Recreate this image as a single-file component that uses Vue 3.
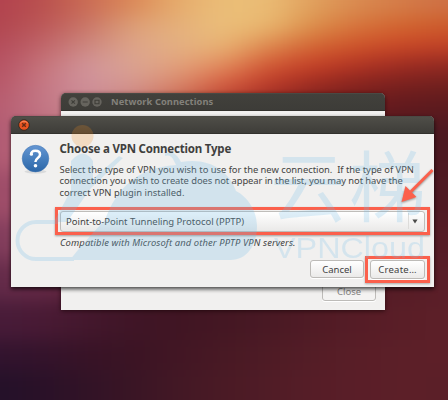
<script setup>
const rows = [
  { y: -30, h: 45, c: ['#b2424f', '#ba514e', '#cb6d55', '#dc8a58', '#e6ac6c', '#ebbe78', '#eabb74', '#e0a05d', '#d98a50', '#d47c49', '#ce7045'] },
  { y: 15, h: 20, c: ['#b1464f', '#bc5858', '#ca7768', '#dda077', '#e5b07a', '#ebbf7a', '#e9b76f', '#dc8f4b', '#d6743c', '#d2652f', '#cd5c2b'] },
  { y: 35, h: 20, c: ['#b34b5a', '#c0666a', '#cd8880', '#dda489', '#e4b182', '#e9b373', '#de8b50', '#d36734', '#cf542a', '#ca4827', '#c34227'] },
  { y: 55, h: 20, c: ['#b55162', '#c6757b', '#d1959a', '#dba491', '#e2a17b', '#e28b5c', '#d25834', '#c64027', '#b23424', '#9e2c22', '#922922'] },
  { y: 75, h: 20, c: ['#b65768', '#c67985', '#cf929c', '#d5968d', '#d88468', '#d4593d', '#ba3828', '#9a2a20', '#84231e', '#78201e', '#70201e'] },
  { y: 95, h: 25, c: ['#b65c70', '#c37886', '#c98990', '#c67a76', '#c15d4a', '#ad3d30', '#8f2a25', '#762020', '#6c1b1d', '#611a1e', '#5c1a1e'] },
  { y: 120, h: 50, c: ['#b05a72', '#bb6b7e', '#b66b76', '#a4534f', '#8a3833', '#742724', '#66201f', '#5a1b1f', '#511820', '#4a171f', '#4c1821'] },
  { y: 170, h: 50, c: ['#9d4c68', '#a3526c', '#964858', '#813c45', '#6a2a32', '#572027', '#4d1a22', '#491821', '#4a1821', '#4b1822', '#501a23'] },
  { y: 220, h: 40, c: ['#823d5c', '#85405c', '#76354c', '#662b3a', '#54202d', '#491924', '#451722', '#471722', '#4d1923', '#511b24', '#561c26'] },
  { y: 260, h: 40, c: ['#642b49', '#672a47', '#5c223a', '#50202e', '#461927', '#431622', '#451722', '#4a1823', '#501a24', '#561c26', '#5a1e28'] },
  { y: 300, h: 40, c: ['#481b39', '#491a34', '#43172c', '#3f1526', '#401523', '#441723', '#491924', '#501b25', '#561c26', '#5a1e27', '#5d1f28'] },
  { y: 340, h: 30, c: ['#32132e', '#34132b', '#381326', '#3b1424', '#421624', '#481924', '#4e1b25', '#541d26', '#591e27', '#5c1f28', '#5d1f28'] },
  { y: 370, h: 90, c: ['#241129', '#2a1128', '#321326', '#3a1525', '#431825', '#4a1a25', '#501c26', '#561d27', '#5a1e28', '#5c1f28', '#5b1f28'] },
]
</script>

<template>
  <main class="desktop">
    <svg class="wallpaper" width="448" height="400" viewBox="0 0 448 400" aria-hidden="true">
      <defs>
        <filter id="soft" filterUnits="userSpaceOnUse" x="-60" y="-60" width="568" height="520" color-interpolation-filters="sRGB">
          <feGaussianBlur stdDeviation="14 10" />
        </filter>
        <linearGradient v-for="(r, i) in rows" :id="'row' + i" :key="i" gradientUnits="userSpaceOnUse" x1="0" x2="448" y1="0" y2="0">
          <stop v-for="(c, j) in r.c" :key="j" :offset="j / 10" :stop-color="c" />
        </linearGradient>
      </defs>
      <g filter="url(#soft)">
        <rect v-for="(r, i) in rows" :key="i" x="-60" :y="i ? r.y : -60" width="568" :height="i ? r.h + 1 : 76" :fill="`url(#row${i})`" />
      </g>
    </svg>

    <section class="window back">
      <header class="titlebar">
        <svg width="34" height="12" viewBox="0 0 34 12" fill="none">
          <g fill="#66645e"><circle cx="5.2" cy="6" r="4.7" /><circle cx="17.2" cy="6" r="4.7" /><circle cx="29" cy="6" r="4.7" /></g>
          <path d="M3.5 4.3l3.4 3.4m0-3.4L3.5 7.7M14.7 6h5M27 4.2h4v3.6h-4z" stroke="#3e3d38" stroke-width="1.1" />
        </svg>
        <span class="back-title">Network Connections</span>
      </header>
      <div class="back-body"><button class="btn close-btn"><span>Close</span></button></div>
    </section>

    <section class="window dialog">
      <header class="titlebar front">
        <svg width="12" height="12" viewBox="0 0 12 12">
          <circle cx="6" cy="6" r="5.3" fill="#e95420" stroke="#28221c" stroke-width=".8" />
          <path d="M2.2 4.5a4.3 4.3 0 0 1 7.6 0" fill="none" stroke="#f58a60" />
          <path d="M4.2 4.2l3.6 3.6m0-3.6L4.2 7.8" stroke="#672b15" stroke-width="1.4" />
        </svg>
      </header>
      <div class="content">
        <svg class="question" width="30" height="32" viewBox="0 0 30 32">
          <defs>
            <linearGradient id="blue" x1="0" y1="0" x2="0" y2="1"><stop stop-color="#6596d2" /><stop offset=".5" stop-color="#477fbe" /><stop offset="1" stop-color="#2c66a7" /></linearGradient>
          </defs>
          <ellipse cx="14.5" cy="27.6" rx="11" ry="2" fill="#c9cbcd" opacity=".6" />
          <circle cx="14.5" cy="14.6" r="13.3" fill="url(#blue)" stroke="#3e73b0" stroke-width=".5" />
          <path d="M10.2 10.8c-.5-2.6 1.3-4 4.2-4 2.9 0 4.6 1.4 4.6 3.7 0 3.7-4.6 3.4-4.6 7.6" fill="none" stroke="#fff" stroke-width="2.5" />
          <circle cx="10.4" cy="10.2" r="1.6" fill="#fff" /><circle cx="14.5" cy="21.7" r="1.8" fill="#fff" />
        </svg>
        <div class="main">
          <h1><span>Choose a VPN Connection Type</span></h1>
          <p class="description">
            <span class="l1">Select the type of VPN you wish to use for the new connection.&nbsp; If the type of VPN</span>
            <span class="l2">connection you wish to create does not appear in the list, you may not have the</span>
            <span class="l3">correct VPN plugin installed.</span>
          </p>
          <div class="highlight">
            <button class="select">
              <span>Point-to-Point Tunneling Protocol (PPTP)</span>
              <i><svg width="6" height="5" viewBox="0 0 6 5"><path d="M.4.5h5.2L3 4.6z" fill="#4b4b49" /></svg></i>
            </button>
          </div>
          <p class="hint">Compatible with Microsoft and other PPTP VPN servers.</p>
          <div class="actions">
            <button class="btn"><span>Cancel</span></button>
            <div class="create-mark"><button class="btn"><span class="create">Create…</span></button></div>
          </div>
        </div>
      </div>
    </section>

    <svg class="overlay" width="448" height="400" viewBox="0 0 448 400">
      <circle cx="82.5" cy="136" r="11" fill="#f08b22" opacity=".22" />
      <g opacity=".23" fill="#70bce9">
        <path d="M70 260Q82 244 105 220C116 190 135 168 176 165l-3-6q-3-5-8-3v-3c8-2 12 1 16 9 27-5 48 8 55 29 12 6 21 20 21 35 0 20-11 34-26 34H70z" />
        <path d="M75 157q8-7 15 0l3 4v18l26-23 4 2-32 30-24 34H54l17-32v-29z" />
        <path d="M58 222H36a18 18 0 0 0 0 37h38" fill="none" stroke="#70bce9" stroke-width="4" />
      </g>
      <g class="watermark">
        <text class="cn" x="270" y="216">云梯</text>
        <text class="latin" x="274" y="258" textLength="151" lengthAdjust="spacingAndGlyphs">VPNCloud</text>
      </g>
      <g class="arrow"><path d="M432.5 170L411 191.5" stroke="#fb604c" stroke-width="3" /><path d="M401.5 202l4-16 11 11z" fill="#fb604c" /></g>
    </svg>
  </main>
</template>

<style>
body { margin: 0; overflow: hidden; }
</style>
<style scoped>
* { box-sizing: border-box; }
.desktop { position: relative; width: 448px; height: 400px; overflow: hidden; font-family: "Noto Sans", "Open Sans", sans-serif; font-size: 9.5px; color: #434342; white-space: nowrap; }
.wallpaper { display: block; }
.window { position: absolute; background: #f1f0ef; border-radius: 5px 5px 0 0; }
.back { left: 61px; top: 93px; width: 324px; height: 217px; display: flex; flex-direction: column; box-shadow: 0 1px 4px rgba(20, 0, 5, .65); }
.dialog { left: 11px; top: 116px; width: 423px; height: 171px; box-shadow: 0 2px 4px rgba(0, 0, 0, .75); }
.titlebar { height: 18px; flex: none; display: flex; align-items: center; padding-left: 7px; border-radius: 5px 5px 0 0; background: linear-gradient(#42413c, #3d3c38); border-bottom: 1px solid #32312d; color: #83817b; box-shadow: inset 0 1px #4a4944; }
.back-title { margin-left: 9px; font-size: 9.3px; font-weight: 700; letter-spacing: .08px; }
.front { background: linear-gradient(#504f49, #3e3d39); }
.back-body { flex: 1; display: flex; align-items: flex-end; justify-content: flex-end; padding: 0 9px 9px; }
.btn { display: flex; align-items: center; justify-content: center; width: 54px; height: 18px; padding: 0; border: 1px solid #bdbbb8; border-radius: 3px; background: linear-gradient(#fff, #ebeae9); color: #404040; font: 9.5px "Noto Sans", sans-serif; box-shadow: 0 1px 0 #fff; }
.close-btn { color: #858482; background: #f4f3f2; padding-bottom: 1px; }
.content { display: flex; padding: 10px 3px 0 10px; }
.question { flex: none; margin: 0 4px 0 0; }
.main { width: 375px; display: flex; flex-direction: column; }
h1 { margin: -3px 0 0 4.5px; height: 16px; line-height: 16px; font-size: 11.5px; font-weight: 700; letter-spacing: -.2px; color: #3f3f3e; }
.description { display: flex; flex-direction: column; margin: 7px 0 0 4.5px; line-height: 11.3px; font-size: 9.4px; }
.l1 { letter-spacing: -.02px; }
.l2 { letter-spacing: -.07px; }
.l3 { letter-spacing: .02px; }
.highlight { margin-top: 9px; height: 28px; border: 3px solid #fb604c; padding: 1px 2px; box-shadow: 0 1px 2px rgba(0, 0, 0, .35); background: #f1f0ef; }
.select { display: flex; align-items: center; justify-content: space-between; width: 100%; height: 21px; padding: 0 0 0 5px; border: 1px solid #bfbdba; border-radius: 3px; background: linear-gradient(#fff, #eae9e8); color: #434342; font: 9.5px "Noto Sans", sans-serif; letter-spacing: -.02px; }
.select i { display: flex; align-items: center; height: 16px; padding: 0 6px 0 3px; border-left: 1px solid #dddcda; }
.hint { margin: 1px 0 0 5px; height: 13px; line-height: 13px; font-style: italic; font-size: 9.4px; letter-spacing: .12px; }
.actions { display: flex; justify-content: flex-end; align-items: center; gap: 1px; margin-top: 7px; }
.create-mark { width: 65px; height: 27px; border: 3px solid #fb604c; padding: 1px 2px; box-shadow: 0 1px 2px rgba(0, 0, 0, .3); }
.create-mark .btn { width: 55px; height: 19px; }
.create { letter-spacing: .25px; }
.overlay { position: absolute; inset: 0; pointer-events: none; }
.watermark { fill: #70bce9; opacity: .22; }
.cn { font: 400 77px "Noto Sans CJK SC", sans-serif; letter-spacing: 2px; }
.latin { font: 30px "Liberation Sans", sans-serif; }
.arrow { filter: drop-shadow(0 1px 1px rgba(0, 0, 0, .4)); }
</style>
